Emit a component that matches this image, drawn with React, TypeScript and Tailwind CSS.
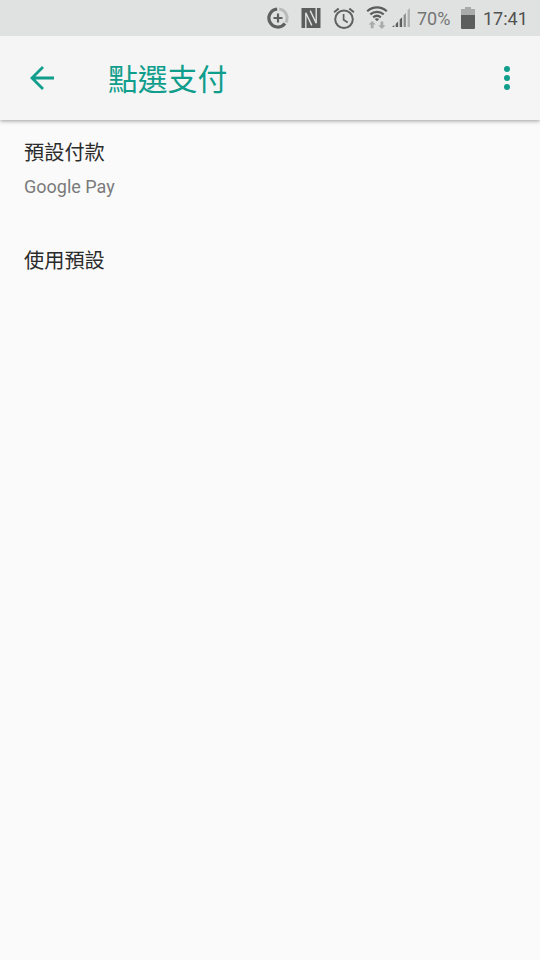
function DataSaverIcon() {
  return (
    <svg viewBox="0 0 22 22" className="h-[22px] w-[22px]" fill="none" stroke="#5f6060">
      <path d="M12.2 2.1A9 9 0 0 1 18.9 15.4" stroke="#b9bbba" strokeWidth="3" />
      <path d="M10.2 2.05A9 9 0 1 0 18 16.6" strokeWidth="3.2" />
      <path d="M11 6.5v9M6.5 11h9" strokeWidth="2.2" />
    </svg>
  );
}

function NfcIcon() {
  return (
    <svg viewBox="0 0 20 20" className="h-5 w-5">
      <path d="M0.5 0h19v20h-19z" fill="#5c5d5d" />
      <path d="M4.8 20V4.8l6 12.6M15.2 0v15.2l-6-12.6" fill="none" stroke="#e0e1e0" strokeWidth="1.4" />
    </svg>
  );
}

function AlarmIcon() {
  return (
    <svg viewBox="0 0 22 22" className="h-[22px] w-[22px]" fill="none" stroke="#5f6060" strokeWidth="2">
      <circle cx="11" cy="12.2" r="8.8" />
      <path d="M1.1 5.3 5.7 1.4M20.9 5.3l-4.6-3.9" />
      <path d="M10.6 7v5.7l4.1 2.8" strokeWidth="1.7" />
    </svg>
  );
}

function WifiIcon() {
  return (
    <svg viewBox="0 0 22 24" className="h-6 w-[22px]" fill="none">
      <g stroke="#5c5d5d" strokeWidth="2.2">
        <path d="M1.2 5.2c5.7-5.1 13.9-5.1 19.6 0" />
        <path d="M4.3 8.4c3.9-3.5 9.5-3.5 13.4 0" />
        <path d="M7.2 11.4c2.3-2 5.3-2 7.6 0" />
      </g>
      <path d="M8.8 12.9c1.4-1 3-1 4.4 0L11 15.2z" fill="#5c5d5d" />
      <path d="M6.2 15 9.8 18.6H7.6V22.2H4.8v-3.6H2.6zM15.9 22.9 12.3 19.3h2.2V15.6h2.8v3.7h2.2z" fill="#a9abaa" />
    </svg>
  );
}

function SignalIcon() {
  return (
    <svg viewBox="0 0 18 20" className="h-5 w-[18px]">
      <path d="M0 19 2.3 17V19zM3.7 15.9 6.1 13.6V19H3.7zM7.7 11.6 10.1 9.2V19H7.7z" fill="#5c5d5d" />
      <path d="M11.6 7.2 13.9 4.9V19h-2.3z" fill="#8d8f8e" />
      <path d="M15.6 2.3 17.9 0v19h-2.3z" fill="#b0b2b1" />
    </svg>
  );
}

function BatteryIcon() {
  return (
    <svg viewBox="0 0 14 22" className="h-[22px] w-3.5">
      <path d="M4 0h6v2h4v6H0V2h4z" fill="#a9abaa" />
      <path d="M0 8h14v13a1 1 0 0 1-1 1H1a1 1 0 0 1-1-1z" fill="#5c5d5d" />
    </svg>
  );
}

function StatusBar() {
  return (
    <div className="relative z-10 flex h-9 items-center justify-end bg-[#e0e2e1] pr-[12px] font-[Roboto,sans-serif] text-[18px] leading-none font-[450]">
      <DataSaverIcon />
      <div className="ml-[12px]">
        <NfcIcon />
      </div>
      <div className="ml-[12px]">
        <AlarmIcon />
      </div>
      <div className="ml-[11px]">
        <WifiIcon />
      </div>
      <div className="ml-[4px]">
        <SignalIcon />
      </div>
      <span className="ml-[7px] w-[34px] pt-[2px] whitespace-nowrap text-[#747575]">70%</span>
      <div className="ml-[10px]">
        <BatteryIcon />
      </div>
      <span className="ml-[8px] w-[45px] pt-[2px] whitespace-nowrap text-[#505151]">17:41</span>
    </div>
  );
}

function AppBar() {
  return (
    <header className="relative flex h-[84px] items-center bg-[#f5f5f5] pl-[30px] text-[#0f9d8c] shadow-[0_1px_4px_rgba(0,0,0,0.38)]">
      <button aria-label="返回">
        <svg viewBox="0 0 24 24" className="h-6 w-6" fill="none" stroke="currentColor" strokeWidth="2.8">
          <path d="M24 12H2.5M13 1 2 12l11 11" />
        </svg>
      </button>
      <h1 className="ml-[54px] pt-[4px] text-[29.8px] leading-none">點選支付</h1>
      <button aria-label="更多選項" className="mr-[30px] ml-auto">
        <svg viewBox="0 0 6 24" className="h-6 w-1.5" fill="currentColor">
          <circle cx="3" cy="3" r="3" />
          <circle cx="3" cy="12" r="3" />
          <circle cx="3" cy="21" r="3" />
        </svg>
      </button>
    </header>
  );
}

export default function App() {
  return (
    <div className="flex h-[960px] w-[540px] flex-col overflow-hidden bg-[#fafafa] font-[Roboto,'Noto_Sans_CJK_TC',sans-serif]">
      <StatusBar />
      <AppBar />
      <main className="flex flex-col px-6 pt-[19px] text-[#2b2b2b]">
        <section>
          <h2 className="text-[20.2px] leading-[28px]">預設付款</h2>
          <p className="mt-[8px] text-[18px] leading-[24px] text-[#7a7a7a]">Google Pay</p>
        </section>
        <section className="mt-[48px]">
          <h2 className="text-[20.2px] leading-[28px]">使用預設</h2>
        </section>
      </main>
    </div>
  );
}
